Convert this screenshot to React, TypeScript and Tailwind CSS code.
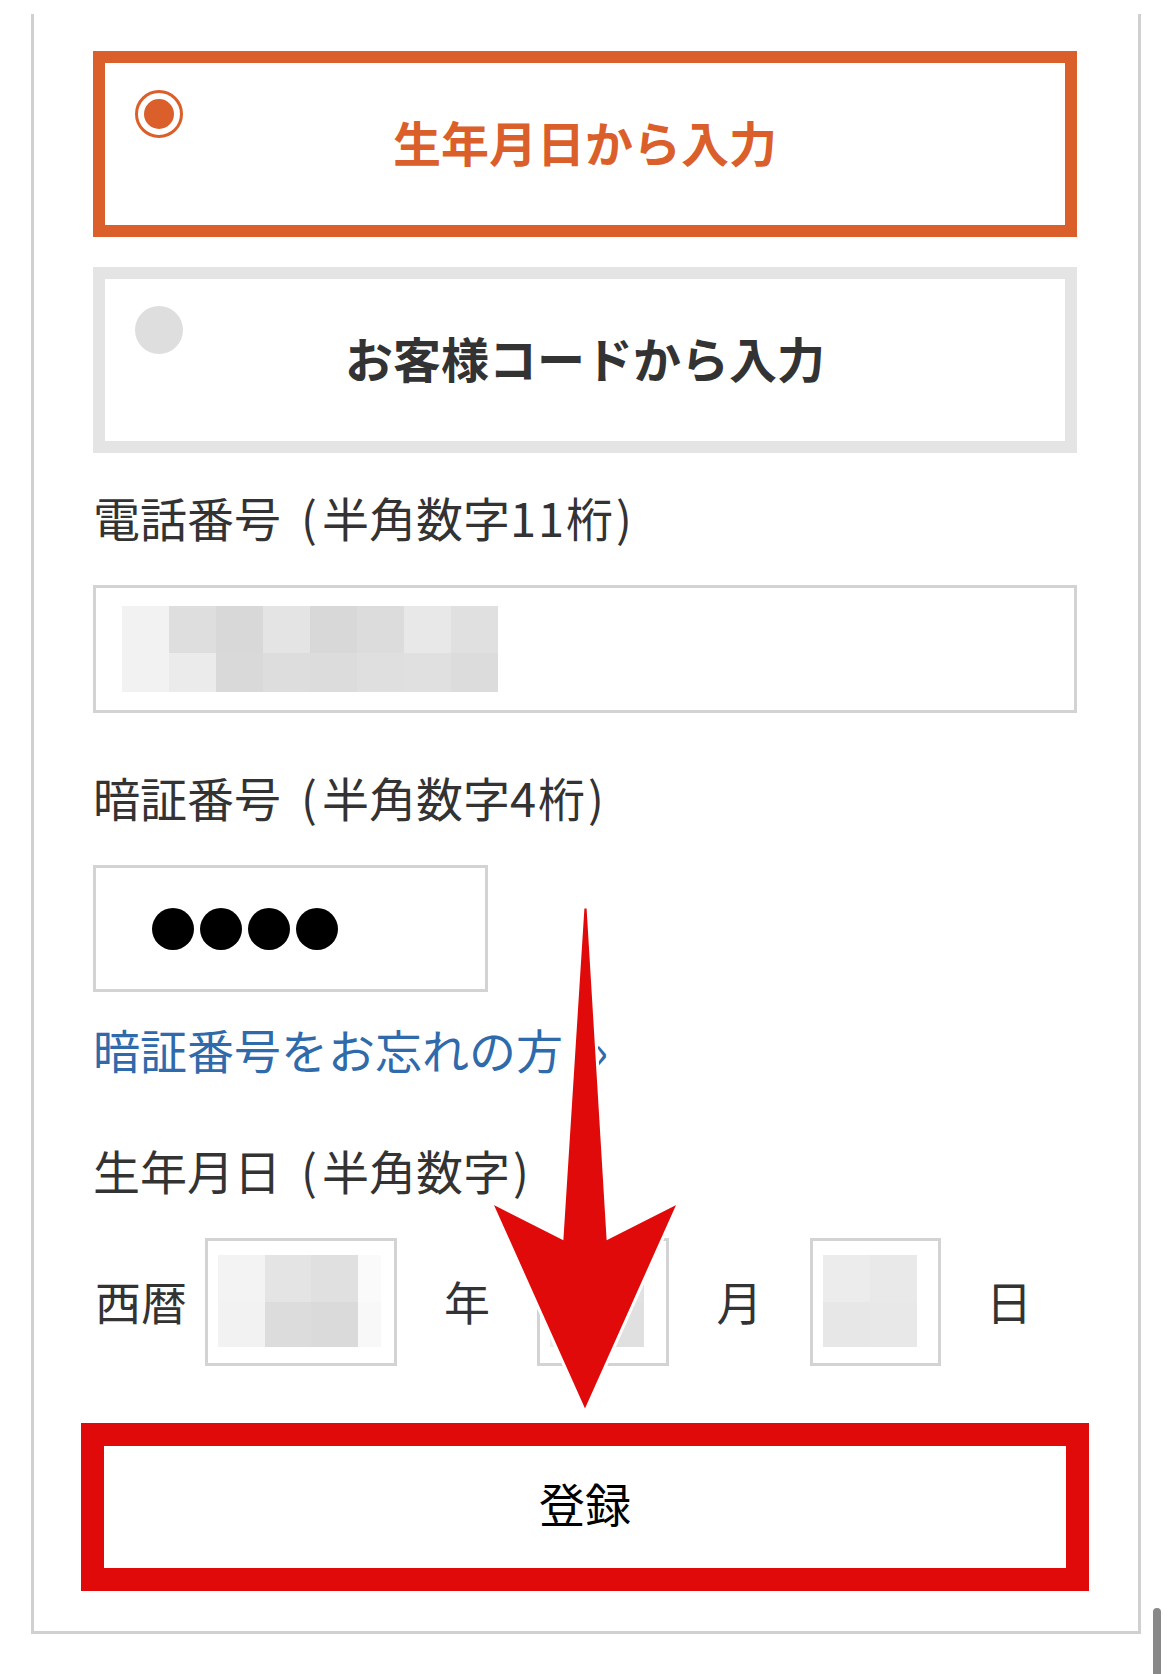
import React from "react";

const phoneCells = [
  "bg-[#f2f2f2]", "bg-[#dedede]", "bg-[#d8d8d8]", "bg-[#e4e4e4]", "bg-[#d8d8d8]", "bg-[#dcdcdc]", "bg-[#e8e8e8]", "bg-[#e0e0e0]",
  "bg-[#f2f2f2]", "bg-[#ebebeb]", "bg-[#d9d9d9]", "bg-[#dddddd]", "bg-[#dcdcdc]", "bg-[#dfdfdf]", "bg-[#e0e0e0]", "bg-[#dcdcdc]",
];
const yearCells = [
  "bg-[#f3f3f3]", "bg-[#e4e4e4]", "bg-[#e0e0e0]", "bg-[#fafafa]",
  "bg-[#f2f2f2]", "bg-[#dcdcdc]", "bg-[#dadada]", "bg-[#f8f8f8]",
];
const monthCells = ["bg-[#eeeeee]", "bg-[#e2e2e2]", "bg-[#ececec]", "bg-[#e0e0e0]"];
const dayCells = ["bg-[#ececec]", "bg-[#e9e9e9]", "bg-[#e7e7e7]", "bg-[#e8e8e8]"];

function DateBox({ cells, cols }: { cells: string[]; cols: string }) {
  return (
    <div className="h-[128px] border-[3px] border-[#d3d3d3] bg-white pt-[14px] pl-[10px]">
      <div className={`grid ${cols} grid-rows-[47px_45px]`}>
        {cells.map((c, i) => (
          <div key={i} className={c} />
        ))}
      </div>
    </div>
  );
}

function Label({ head, digits, tail }: { head: string; digits?: string; tail?: string }) {
  return (
    <div className="text-[47px] leading-none text-[#333333] whitespace-nowrap">
      <span>{head}</span>
      <span className="ml-[20px] mr-[5px]">(</span>
      <span>半角数字</span>
      {digits ? <span className="tracking-[2px]">{digits}</span> : null}
      {tail ? <span>{tail}</span> : null}
      <span className="ml-[3px]">)</span>
    </div>
  );
}

export default function App() {
  return (
    <div className="relative w-[1170px] h-[1674px] bg-white overflow-hidden font-['Noto_Sans_CJK_JP','Noto_Sans',sans-serif]">
      <div className="ml-[31px] mt-[14px] w-[1110px] border-x-[3px] border-b-[3px] border-[#d0d0d0] pl-[59px] pr-[61px] pt-[37px] pb-[40px]">
        {/* Selected option */}
        <div className="relative h-[186px] border-[12px] border-[#db5f2a] flex items-center justify-center">
          <div className="absolute left-[30px] top-[27px] w-[48px] h-[48px] rounded-full border-[3px] border-[#db5f2a] flex items-center justify-center">
            <div className="w-[30px] h-[30px] rounded-full bg-[#db5f2a]" />
          </div>
          <span className="pb-[6px] text-[48px] leading-none font-bold text-[#db5f2a]">生年月日から入力</span>
        </div>

        {/* Unselected option */}
        <div className="relative mt-[30px] h-[186px] border-[12px] border-[#e4e4e4] flex items-center justify-center">
          <div className="absolute left-[30px] top-[27px] w-[48px] h-[48px] rounded-full bg-[#dedede]" />
          <span className="pb-[6px] text-[48px] leading-none font-bold text-[#333333]">お客様コードから入力</span>
        </div>

        {/* Phone */}
        <div className="mt-[40px]">
          <Label head="電話番号" digits="11" tail="桁" />
        </div>
        <div className="mt-[45px] h-[128px] border-[3px] border-[#d3d3d3] pl-[26px] pt-[18px]">
          <div className="grid w-[376px] grid-cols-8 grid-rows-[47px_39px]">
            {phoneCells.map((c, i) => (
              <div key={i} className={c} />
            ))}
          </div>
        </div>

        {/* PIN */}
        <div className="mt-[60px]">
          <Label head="暗証番号" digits="4" tail="桁" />
        </div>
        <div className="mt-[45px] w-[395px] h-[127px] border-[3px] border-[#d3d3d3] pl-[56px] flex items-center gap-[6px]">
          <div className="w-[42px] h-[42px] rounded-full bg-black" />
          <div className="w-[42px] h-[42px] rounded-full bg-black" />
          <div className="w-[42px] h-[42px] rounded-full bg-black" />
          <div className="w-[42px] h-[42px] rounded-full bg-black" />
        </div>

        <div className="mt-[33px] text-[47px] leading-none text-[#2f6aaa] flex items-center whitespace-nowrap">
          <span>暗証番号をお忘れの方</span>
          <span className="ml-[31px]">›</span>
        </div>

        {/* Birthday */}
        <div className="mt-[74px]">
          <Label head="生年月日" />
        </div>
        <div className="mt-[45px] grid grid-cols-[112px_192px_140px_132px_141px_131px_136px] items-center text-[46px] leading-none text-[#333333]">
          <span className="pl-[2px] pb-[4px]">西暦</span>
          <DateBox cells={yearCells} cols="grid-cols-[47px_46px_47px_23px]" />
          <span className="text-center pb-[4px]">年</span>
          <DateBox cells={monthCells} cols="grid-cols-[47px_47px]" />
          <span className="text-center pb-[4px]">月</span>
          <DateBox cells={dayCells} cols="grid-cols-[47px_47px]" />
          <span className="text-center pb-[4px]">日</span>
        </div>

        {/* Register button with red highlight */}
        <div className="-mx-[12px] mt-[57px] h-[168px] border-[23px] border-[#e00a0a] bg-white flex items-center justify-center">
          <span className="pb-[10px] text-[46px] leading-none text-black">登録</span>
        </div>
      </div>

      {/* Red arrow annotation */}
      <svg className="absolute left-0 top-0 pointer-events-none" width="1170" height="1674" viewBox="0 0 1170 1674">
        <polygon
          points="583,907 588,907 608,1238 679,1202 585,1412 491,1202 562,1238"
          fill="#e00a0a"
          stroke="#ffffff"
          strokeWidth="3"
          strokeLinejoin="miter"
        />
      </svg>

      {/* Scrollbar */}
      <div className="absolute left-[1153px] top-[1608px] w-[8px] h-[80px] rounded-full bg-[#888888]" />
    </div>
  );
}
